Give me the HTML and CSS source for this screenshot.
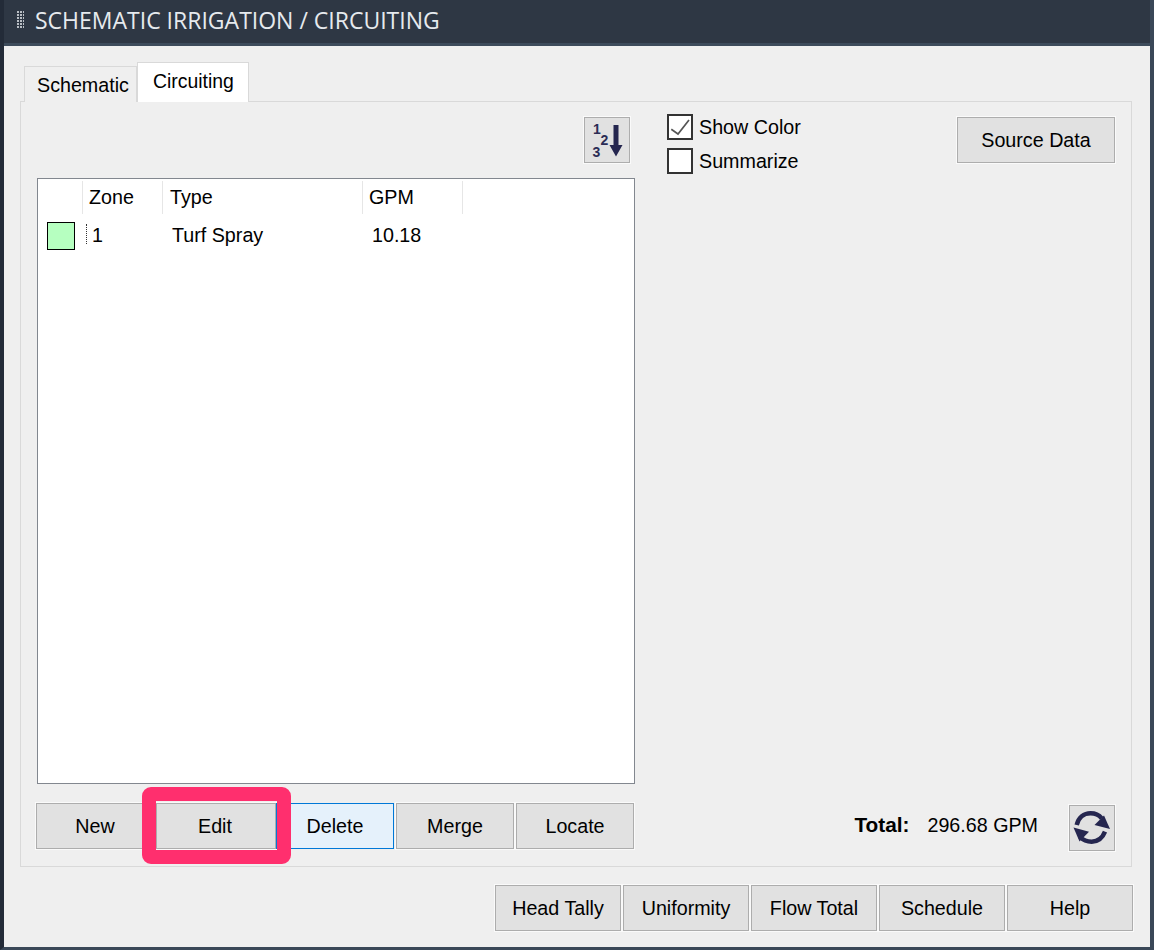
FILE: index.html
```html
<!DOCTYPE html>
<html lang="en">
<head>
<meta charset="utf-8">
<title>Schematic Irrigation / Circuiting</title>
<link rel="stylesheet" href="styles.css">
</head>
<body>
<div class="window">
  <header class="titlebar">
    <span class="grip"></span>
    <span class="title">SCHEMATIC IRRIGATION / CIRCUITING</span>
  </header>
  <main class="content">
    <div class="tabs">
      <div class="tab">Schematic</div>
      <div class="tab tab-active">Circuiting</div>
    </div>
    <section class="panel">
      <div class="left">
        <div class="sortrow">
          <button class="btn icon-btn sort-btn" aria-label="Sort">
            <svg width="44" height="44" viewBox="0 0 44 44">
              <text class="digit" x="8" y="16">1</text>
              <text class="digit" x="15.500" y="27">2</text>
              <text class="digit" x="7.500" y="39">3</text>
              <path d="M28.500 7h5v20h4L31 38.500 24.500 27h4z" fill="#25264f"/>
            </svg>
          </button>
        </div>
        <div class="list">
          <div class="list-head">
            <div class="hcell hcell-swatch"></div>
            <div class="hcell hcell-zone">Zone</div>
            <div class="hcell hcell-type">Type</div>
            <div class="hcell hcell-gpm">GPM</div>
          </div>
          <div class="list-row">
            <div class="cell-swatch"><span class="swatch"></span></div>
            <div class="cell-zone">1</div>
            <div class="cell-type">Turf Spray</div>
            <div class="cell-gpm">10.18</div>
          </div>
        </div>
        <div class="actions">
          <button class="btn action">New</button>
          <button class="btn action action-edit">Edit<span class="highlight"></span></button>
          <button class="btn action action-focus">Delete</button>
          <button class="btn action">Merge</button>
          <button class="btn action">Locate</button>
        </div>
      </div>
      <div class="right">
        <div class="right-top">
          <div class="checks">
            <label class="check">
              <span class="box">
                <svg width="22" height="22" viewBox="0 0 22 22"><path d="M2.300 13.300L9 18 20 4" fill="none" stroke="#555" stroke-width="1.700"/></svg>
              </span>Show Color
            </label>
            <label class="check"><span class="box"></span>Summarize</label>
          </div>
          <button class="btn source">Source Data</button>
        </div>
        <div class="right-bottom">
          <span class="total-label">Total:</span>
          <span class="total-value">296.68 GPM</span>
          <button class="btn icon-btn refresh" aria-label="Refresh">
            <svg width="44" height="44" viewBox="0 0 44 44">
              <path d="M6.700 19C8.500 11.500 14 7.300 20.500 7.300c4.500 0 8.500 1.700 11.200 5" fill="none" stroke="#25264f" stroke-width="4.500"/>
              <path d="M35 25.700C32.500 32 27.500 35.700 21.700 35.700c-4.500 0-8.700-1.800-11.700-5" fill="none" stroke="#25264f" stroke-width="4.500"/>
              <path d="M40 23L34 9.500 24.500 19z" fill="#25264f"/>
              <path d="M3.500 21.500L9.500 35.500 19 25.700z" fill="#25264f"/>
            </svg>
          </button>
        </div>
      </div>
    </section>
    <footer class="footer">
      <button class="btn foot">Head Tally</button>
      <button class="btn foot">Uniformity</button>
      <button class="btn foot">Flow Total</button>
      <button class="btn foot">Schedule</button>
      <button class="btn foot">Help</button>
    </footer>
  </main>
</div>
</body>
</html>
```
FILE: styles.css
```css
* { box-sizing: border-box; }
html, body { margin: 0; padding: 0; }
body {
  width: 1154px;
  height: 950px;
  overflow: hidden;
  font-family: "Liberation Sans", Arial, sans-serif;
  font-size: 19.7px;
  color: #000;
}
.window {
  width: 1154px;
  height: 950px;
  display: flex;
  flex-direction: column;
  background: #2e3744;
  border-left: 4px solid #232b38;
  border-right: 4px solid #3a4858;
  border-bottom: 3px solid #3a4858;
}
.titlebar {
  height: 46px;
  flex: none;
  display: flex;
  align-items: center;
  padding: 0 0 4px 13px;
  gap: 11px;
  background: #2e3744;
  border-bottom: 3px solid #3d4b5b;
}
.grip {
  width: 7px;
  height: 18px;
  background-image: radial-gradient(circle at 1px 1px, #b9bec4 1px, transparent 1.2px);
  background-size: 3px 3px;
}
.title {
  font-family: "Open Sans", "Noto Sans", sans-serif;
  font-size: 23px;
  color: #e6eaee;
  white-space: nowrap;
}
.content {
  flex: 1;
  display: flex;
  flex-direction: column;
  background: #efefef;
  padding: 16px 17px 0 16px;
}
.tabs {
  height: 40px;
  display: flex;
  align-items: flex-end;
  padding-left: 4px;
  margin-bottom: -1px;
  position: relative;
  z-index: 1;
}
.tab {
  width: 113px;
  height: 36px;
  border: 1px solid #d9d9d9;
  border-bottom: 0;
  padding-left: 12px;
  padding-top: 6px;
  line-height: 24px;
  background: #efefef;
}
.tab-active {
  width: 112px;
  height: 40px;
  padding-left: 15px;
  padding-top: 6px;
  font-size: 19.4px;
  background: #fff;
  border-color: #d9d9d9;
}
.panel {
  height: 766px;
  width: 1112px;
  flex: none;
  display: flex;
  gap: 32px;
  border: 1px solid #d9d9d9;
  padding: 15px 16px 16px 16px;
}
.left {
  width: 598px;
  flex: none;
  display: flex;
  flex-direction: column;
}
.sortrow {
  height: 61px;
  display: flex;
  justify-content: flex-end;
  padding-right: 5px;
  align-items: flex-start;
  flex: none;
}
.btn {
  font: inherit;
  color: #000;
  background: #e1e1e1;
  border: 1px solid #adadad;
  outline: 1px solid #fafafa;
  padding: 0;
  margin: 0;
}
.icon-btn {
  display: flex;
  align-items: center;
  justify-content: center;
}
.sort-btn { width: 46px; height: 46px; }
.digit {
  font-family: "Liberation Sans", sans-serif;
  font-size: 14px;
  font-weight: 700;
  fill: #2b2c55;
}
.list {
  height: 606px;
  flex: none;
  background: #fff;
  border: 1px solid #82878f;
}
.list-head {
  display: flex;
  height: 36px;
  padding-top: 2px;
}
.hcell {
  height: 33px;
  line-height: 32px;
  padding-left: 6px;
  border-right: 1px solid #e6e6e6;
  flex: none;
}
.hcell-swatch { width: 45px; }
.hcell-zone { width: 80px; }
.hcell-type { width: 200px; padding-left: 7px; }
.hcell-gpm { width: 100px; }
.list-row {
  display: flex;
  height: 36px;
  margin-top: 7px;
  align-items: flex-start;
}
.cell-swatch {
  width: 48px;
  flex: none;
  padding-left: 9px;
}
.swatch {
  display: block;
  width: 28px;
  height: 28px;
  background: #b6ffc0;
  border: 1px solid #000;
}
.cell-zone {
  width: 86px;
  flex: none;
  padding-left: 5px;
  line-height: 22px;
  height: 20px;
  border-left: 1px dotted #333;
  margin-top: 2px;
}
.cell-type { width: 200px; flex: none; line-height: 26px; }
.cell-gpm { width: 100px; flex: none; line-height: 26px; }
.actions {
  margin-top: 19px;
  margin-left: -1px;
  display: flex;
  gap: 2px;
  flex: none;
}
.action {
  width: 118px;
  height: 46px;
  position: relative;
}
.action-edit { width: 120px; margin-right: -2px; padding-right: 2px; }
.action-focus {
  background: #e5f1fb;
  border-color: #0078d7;
  outline-color: transparent;
}
.highlight {
  position: absolute;
  top: -17px;
  left: -15px;
  right: -16px;
  bottom: -16px;
  border: 14px solid #ff2f6e;
  border-radius: 9px;
  z-index: 2;
}
.right {
  flex: 1;
  display: flex;
  flex-direction: column;
  justify-content: space-between;
}
.right-top {
  display: flex;
  justify-content: space-between;
  align-items: flex-start;
}
.checks {
  display: flex;
  flex-direction: column;
  gap: 8px;
  margin-top: -3px;
}
.check {
  display: flex;
  align-items: center;
  gap: 6px;
  height: 26px;
  line-height: 26px;
}
.box {
  width: 26px;
  height: 26px;
  flex: none;
  border: 2px solid #333;
  background: #fff;
  display: block;
}
.box svg { display: block; }
.source { width: 158px; height: 46px; }
.right-bottom {
  display: flex;
  align-items: center;
  justify-content: flex-end;
  margin-bottom: -1px;
}
.total-label { font-size: 20.800px; font-weight: 700; margin-right: 18px; padding-bottom: 6px; }
.total-value { margin-right: 31px; padding-bottom: 6px; }
.refresh { width: 46px; height: 46px; }
.footer {
  display: flex;
  justify-content: flex-end;
  gap: 2px;
  margin-top: 18px;
}
.foot { width: 126px; height: 46px; }
```
